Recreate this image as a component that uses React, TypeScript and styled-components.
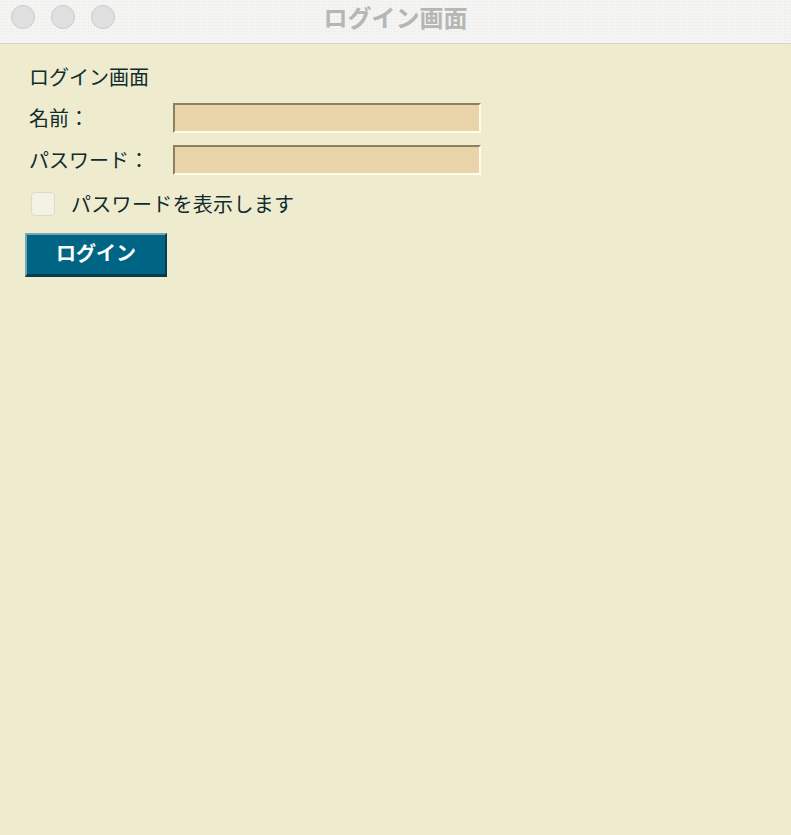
import React from "react";
import styled, { createGlobalStyle } from "styled-components";

const Global = createGlobalStyle`
  html, body { margin: 0; padding: 0; background: #efebcf; }
  body { font-family: "Noto Sans CJK JP", "Noto Sans", sans-serif; }
  * { box-sizing: border-box; }
`;

const Window = styled.div`
  width: 791px;
  min-height: 835px;
  background: #efebcf;
  display: flex;
  flex-direction: column;
`;

const TitleBar = styled.div`
  height: 44px;
  background-color: #f4f4f2;
  background-image: radial-gradient(#e9e9e6 0.6px, transparent 0.7px);
  background-size: 3px 3px;
  border-bottom: 1px solid #d4d4d0;
  display: flex;
  align-items: center;
  position: relative;
  padding-left: 11px;
  padding-bottom: 10px;
`;

const Lights = styled.div`
  display: flex;
  gap: 16px;
`;

const Light = styled.span`
  width: 24px;
  height: 24px;
  border-radius: 50%;
  background: #e0e0e0;
  border: 1px solid #c9c9c7;
`;

const Title = styled.div`
  position: absolute;
  left: 0;
  right: 0;
  top: 0;
  height: 32px;
  display: flex;
  align-items: center;
  justify-content: center;
  font-size: 24px;
  font-weight: 700;
  color: #b6b6b3;
  pointer-events: none;
`;

const Content = styled.div`
  padding: 21px 0 0 25px;
  display: flex;
  flex-direction: column;
  align-items: flex-start;
  color: #0f2c2e;
  font-size: 20px;
`;

const Heading = styled.div`
  line-height: 24px;
  height: 24px;
  padding-left: 4px;
`;

const Form = styled.div`
  margin-top: 14px;
  display: flex;
  flex-direction: column;
  gap: 12px;
`;

const Row = styled.div`
  display: flex;
  align-items: center;
  height: 30px;
`;

const Label = styled.label`
  width: 148px;
  padding-left: 4px;
  line-height: 24px;
`;

const Input = styled.input`
  width: 308px;
  height: 30px;
  background: #e8d4a8;
  border-style: solid;
  border-width: 2px;
  border-color: #8b8062 #fffdea #fffdea #8b8062;
  outline: none;
  padding: 0 4px;
  font-size: 16px;
  font-family: inherit;
`;

const CheckRow = styled.label`
  margin-top: 17px;
  margin-left: 6px;
  display: flex;
  align-items: center;
  height: 24px;
  gap: 16px;
  line-height: 24px;
  letter-spacing: 0.3px;
`;

const Box = styled.span`
  width: 24px;
  height: 24px;
  border-radius: 4px;
  background: #f4f2e5;
  border: 1px solid #dfdbc6;
`;

const Button = styled.button`
  margin-top: 17px;
  width: 142px;
  height: 44px;
  background: #006584;
  color: #ffffff;
  font-family: inherit;
  font-size: 20px;
  font-weight: 700;
  border-style: solid;
  border-width: 2px 2px 3px 2px;
  border-color: #73a6b8 #0b3a48 #0b3a48 #73a6b8;
  padding: 0 0 4px 0;
  cursor: pointer;
`;

export default function App() {
  return (
    <>
      <Global />
      <Window>
        <TitleBar>
          <Lights>
            <Light />
            <Light />
            <Light />
          </Lights>
          <Title>ログイン画面</Title>
        </TitleBar>
        <Content>
          <Heading>ログイン画面</Heading>
          <Form>
            <Row>
              <Label>名前：</Label>
              <Input type="text" />
            </Row>
            <Row>
              <Label>パスワード：</Label>
              <Input type="password" />
            </Row>
          </Form>
          <CheckRow>
            <Box />
            <span>パスワードを表示します</span>
          </CheckRow>
          <Button>ログイン</Button>
        </Content>
      </Window>
    </>
  );
}
